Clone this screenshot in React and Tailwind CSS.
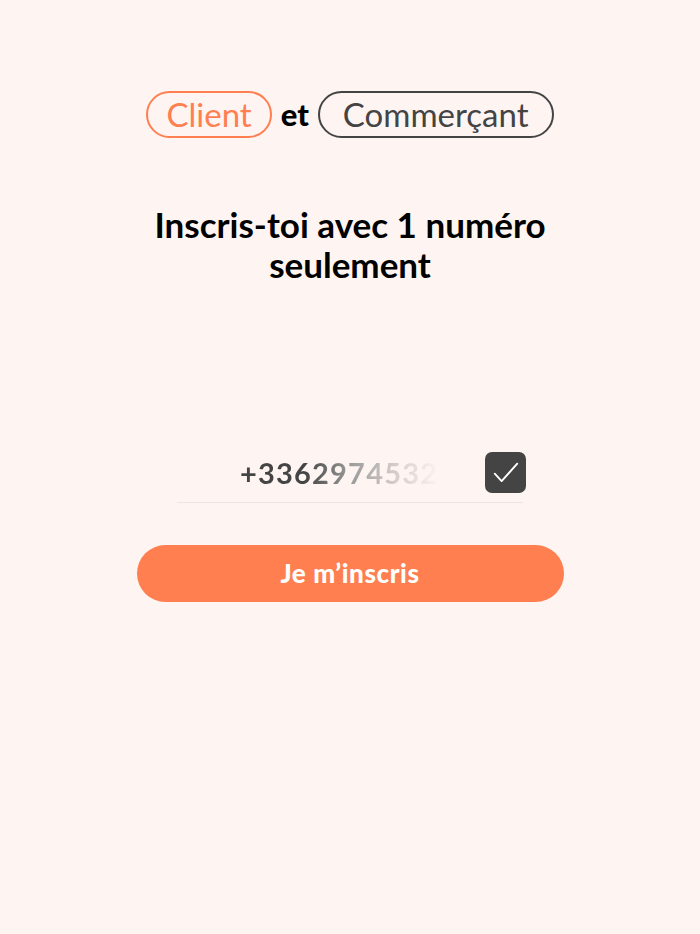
import React from 'react';

const font = { fontFamily: 'Lato, "Noto Sans", sans-serif' };

export default function App() {
  return (
    <div className="min-h-[934px] w-full bg-[#fef5f2] flex flex-col items-center" style={font}>
      <div className="mt-[91px] flex items-center gap-[9px]">
        <span className="h-[47px] px-[18px] flex items-center rounded-full border-2 border-[#ff7f50] text-[#ff7f50] text-[33px] leading-none">
          Client
        </span>
        <span className="text-[31px] font-black text-black leading-none">et</span>
        <span className="h-[47px] px-[23px] flex items-center rounded-full border-2 border-[#444444] text-[#444444] text-[33px] leading-none">
          Commerçant
        </span>
      </div>

      <h1 className="mt-[66px] text-[35px] leading-[40px] font-bold text-black text-center w-[440px]">
        Inscris-toi avec 1 numéro seulement
      </h1>

      <div className="mt-[167px] w-[346px] flex items-center justify-between border-b border-[#f0e4e0] pb-[7px]">
        <span className="ml-[63px] text-[29px] font-bold tracking-[1.2px] bg-[linear-gradient(90deg,#444444_0%,#444444_33%,#999999_55%,#d8d0ce_80%,#fdf2ef_100%)] bg-clip-text text-transparent">
          +3362974532
        </span>
        <span className="w-[41px] h-[41px] rounded-[7px] bg-[#444444] flex items-center justify-center mr-[-3px]">
          <svg width="30" height="30" viewBox="0 0 24 24" fill="none" stroke="white" strokeWidth="1.5" strokeLinecap="round" strokeLinejoin="round">
            <path d="M3 12.5l5.5 6L21 4.5" />
          </svg>
        </span>
      </div>

      <button className="mt-[42px] w-[427px] h-[57px] rounded-full bg-[#ff7f50] text-white text-[26px] font-black tracking-[0.6px]">
        Je m’inscris
      </button>
    </div>
  );
}
